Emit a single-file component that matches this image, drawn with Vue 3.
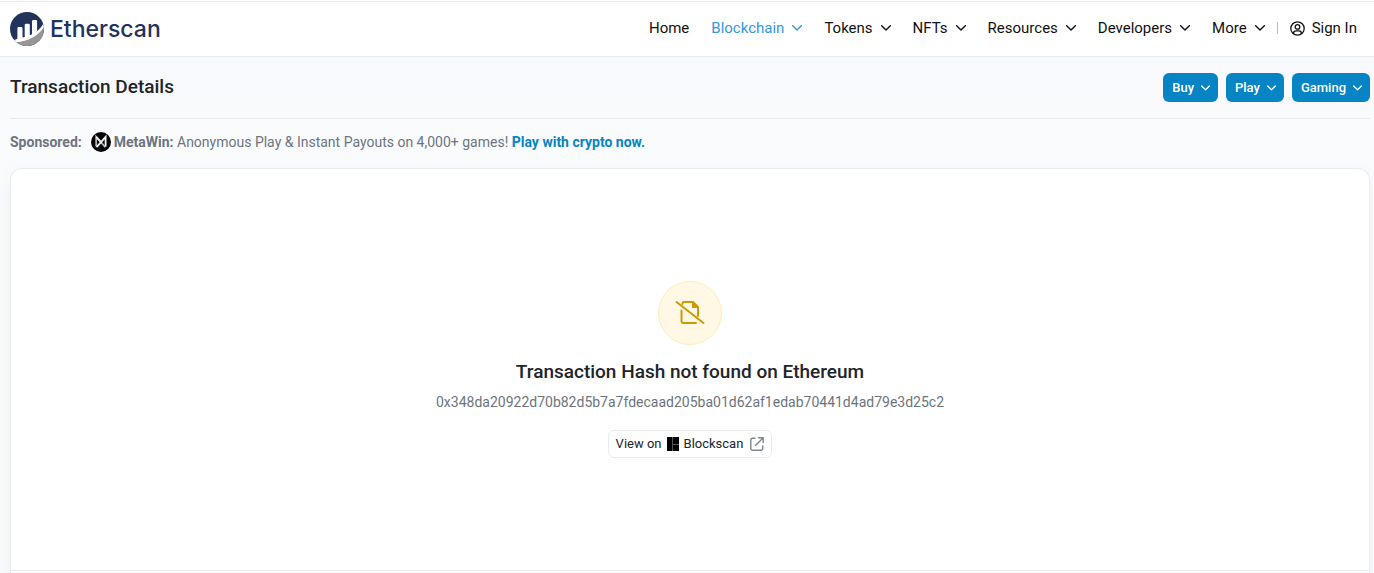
<script setup>
const menu = [
  { label: 'Home', drop: false },
  { label: 'Blockchain', drop: true, active: true },
  { label: 'Tokens', drop: true },
  { label: 'NFTs', drop: true },
  { label: 'Resources', drop: true },
  { label: 'Developers', drop: true },
  { label: 'More', drop: true }
]
const actions = ['Buy', 'Play', 'Gaming']
</script>

<template>
  <div class="page">
    <header class="header">
      <a class="brand" href="#">
        <svg width="34" height="34" viewBox="0 0 34 34" aria-hidden="true">
          <circle cx="17" cy="17" r="17" fill="#21325b" />
          <path d="M4.300 28.200C5.300 27.400 7 27.300 7.400 26.500V16.300Q7.400 15 8.700 15H11.200Q12.500 15 12.500 16.300V25.600L14.700 25V13.100Q14.700 11.700 16 11.700H18.500Q19.800 11.700 19.800 13.100V23.300L22 22.200V9.300Q22 8 23.300 8H25.800Q27.100 8 27.100 9.300V19.200C29.500 17.200 31.700 14.700 33.100 12L34 15.200C31 23.500 18 30.500 6.300 30.200Z" fill="#fff" />
          <path d="M6.300 30.200C18 29.500 28.600 23.500 33.900 15.200A17 17 0 0 1 6.300 30.200Z" fill="#979695" />
        </svg>
        <span class="wordmark">Etherscan</span>
      </a>
      <nav class="nav" aria-label="Main">
        <a v-for="item in menu" :key="item.label" href="#" class="nav-link" :class="{ active: item.active }">
          {{ item.label }}
          <svg v-if="item.drop" class="chevron" width="10" height="6" viewBox="0 0 10 6" aria-hidden="true">
            <path d="M.7.700 5 5 9.300.700" />
          </svg>
        </a>
        <span class="divider"></span>
        <a href="#" class="sign-in">
          <svg width="15" height="15" viewBox="0 0 15 15" fill="none" stroke="currentColor" stroke-width="1.300" aria-hidden="true">
            <circle cx="7.500" cy="7.500" r="6.700" />
            <circle cx="7.500" cy="5.900" r="2.300" />
            <path d="M3.500 12.600C3.600 10.600 4.800 9.900 6 9.900H9C10.200 9.900 11.400 10.600 11.500 12.600" />
          </svg>
          Sign In
        </a>
      </nav>
    </header>

    <main class="main">
      <div class="title-row">
        <h1>Transaction Details</h1>
        <div class="actions">
          <button v-for="name in actions" :key="name" type="button" class="action">
            {{ name }}
            <svg class="chevron" width="9" height="6" viewBox="0 0 10 6" aria-hidden="true">
              <path d="M.7.700 5 5 9.300.700" />
            </svg>
          </button>
        </div>
      </div>

      <p class="sponsor">
        <strong>Sponsored:</strong>
        <svg width="20" height="20" viewBox="0 0 20 20" aria-hidden="true">
          <circle cx="10" cy="10" r="10" fill="#050505" />
          <path d="M5.200 14.500V4.800L14.300 15.200" fill="none" stroke="#b5b5b5" stroke-width="1.800" />
          <path d="M5.600 15.200 14.600 4.800V14.500" fill="none" stroke="#f4f4f4" stroke-width="1.800" />
          <path d="M5.200 4.800 10 10" stroke="#eee" stroke-width="1.800" />
        </svg>
        <span><strong>MetaWin:</strong> Anonymous Play &amp; Instant Payouts on 4,000+ games! <a href="#">Play with crypto now.</a></span>
      </p>

      <section class="card">
        <div class="empty">
          <div class="badge">
            <svg width="30" height="26" viewBox="0 0 30 26" fill="none" stroke="#cc9a06" stroke-width="2" stroke-linecap="round" stroke-linejoin="round" aria-hidden="true">
              <path d="M7.500 4V3.500Q7.500 2 9 2H18L23 7V16" />
              <path d="M17 1.500V8H23.500Z" fill="#cc9a06" stroke="none" />
              <path d="M6.500 10.500V21Q6.500 23 8.500 23H21" />
              <path d="M1.500 2 28.500 23" />
            </svg>
          </div>
          <h2>Transaction Hash not found on Ethereum</h2>
          <p class="hash">0x348da20922d70b82d5b7a7fdecaad205ba01d62af1edab70441d4ad79e3d25c2</p>
          <a class="view" href="#">
            View on
            <svg width="12" height="14" viewBox="0 0 12 14" aria-hidden="true">
              <path d="M0 0H5V14H0ZM6 0H12V7H6ZM6 8H12V14H6Z" fill="#000" />
              <path d="M5 0H6V14H5ZM6 7H12V8H6Z" fill="#555" />
            </svg>
            Blockscan
            <svg class="external" width="14" height="14" viewBox="0 0 14 14" fill="none" stroke="#7d858d" stroke-width="1.400" stroke-linecap="round" stroke-linejoin="round" aria-hidden="true">
              <path d="M5 1.200H2.500Q.8 1.200.8 2.900V11.500Q.8 13.200 2.500 13.200H11Q12.700 13.200 12.700 11.500V9M8.500.800H13.200V5.500M13 1 5.500 8.500" />
            </svg>
          </a>
        </div>
      </section>
    </main>
  </div>
</template>

<style>
body {
  margin: 0;
}
</style>

<style scoped>
.page {
  box-sizing: border-box;
  display: flex;
  flex-direction: column;
  min-height: 100vh;
  background: linear-gradient(#f7f8fb, #fafbfd 140px);
  color: #212529;
  font: 14px/20px Roboto, "Liberation Sans", sans-serif;
}

a {
  text-decoration: none;
}

h1,
h2,
p {
  margin: 0;
}

.header {
  display: flex;
  align-items: center;
  justify-content: space-between;
  box-sizing: border-box;
  height: 56px;
  margin-top: 1px;
  padding: 0 17px 0 10px;
  border-top: 1px solid #e9ecef;
  border-bottom: 1px solid #e7eaf0;
  background: #fff;
  box-shadow: 0 -1px 0 #fff;
}

.brand {
  display: flex;
  align-items: center;
  gap: 6px;
  color: #21325b;
}

.wordmark {
  font: 500 23px/34px Inter, sans-serif;
}

.nav {
  display: flex;
  align-items: center;
  padding-bottom: 2px;
  font-size: 15px;
}

.nav-link,
.sign-in {
  display: flex;
  align-items: center;
  gap: 8px;
  color: #111;
}

.nav-link {
  margin-right: 22px;
}

.nav-link.active {
  color: #3498db;
}

.chevron {
  fill: none;
  stroke: currentColor;
  stroke-width: 1.4;
  stroke-linecap: round;
  stroke-linejoin: round;
}

.divider {
  width: 1px;
  height: 12px;
  margin: 0 12px 0 -10px;
  background: #aebfd0;
}

.sign-in {
  gap: 7px;
}

.main {
  display: flex;
  flex: 1;
  flex-direction: column;
  padding: 0 4px 0 10px;
}

.title-row {
  display: flex;
  align-items: center;
  justify-content: space-between;
  height: 61px;
  border-bottom: 1px solid #e9ecef;
}

h1,
h2 {
  font-size: 19px;
  font-weight: 500;
  line-height: 24px;
}

h1 {
  padding-bottom: 2px;
}

.actions {
  display: flex;
  gap: 8px;
}

.action {
  display: flex;
  align-items: center;
  gap: 7px;
  height: 29px;
  padding: 0 8px 0 9px;
  border: 0;
  border-radius: 6px;
  background: #0784c3;
  color: #fff;
  font: 500 13px/20px Roboto, sans-serif;
}

.sponsor {
  display: flex;
  align-items: center;
  height: 45px;
  margin-bottom: 4px;
  color: #6c757d;
}

.sponsor > svg {
  margin: 0 3px 0 9px;
}

.sponsor strong,
.sponsor a {
  font-weight: 700;
}

.sponsor a {
  color: #0784c3;
}

.card {
  flex: 1;
  border: 1px solid #e9ecef;
  border-bottom: 0;
  border-radius: 12px 12px 0 0;
  background: #fff;
  box-shadow: 0 8px 19px rgba(189, 197, 209, 0.2);
}

.empty {
  display: flex;
  flex-direction: column;
  align-items: center;
  padding: 112px 16px;
  border-bottom: 1px solid #e9ecef;
}

.badge {
  display: grid;
  place-items: center;
  box-sizing: border-box;
  width: 64px;
  height: 64px;
  border: 1px solid #ffecb5;
  border-radius: 50%;
  background: #fff8e4;
}

h2 {
  margin-top: 15px;
}

.hash {
  margin-top: 8px;
  color: #6c757d;
}

.view {
  display: flex;
  align-items: center;
  gap: 5px;
  box-sizing: border-box;
  height: 28px;
  margin-top: 18px;
  padding: 0 7px;
  border: 1px solid #e9ecef;
  border-radius: 6px;
  color: #212529;
  font-size: 13px;
}

.external {
  margin-left: 2px;
}
</style>
